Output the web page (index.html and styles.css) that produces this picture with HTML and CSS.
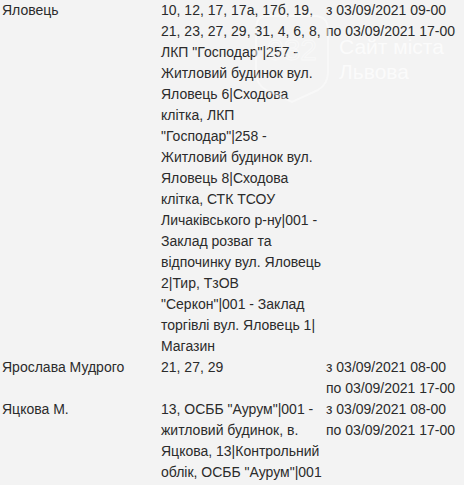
FILE: index.html
```html
<!DOCTYPE html>
<html lang="uk">
<head>
<meta charset="utf-8">
<link rel="stylesheet" href="styles.css">
</head>
<body>
<div class="page">
  <div class="table">
    <div class="row">
      <div class="cell street">Яловець</div>
      <div class="cell houses">10, 12, 17, 17а, 17б, 19, 21, 23, 27, 29, 31, 4, 6, 8, ЛКП "Господар"|257 - Житловий будинок вул. Яловець 6|Сходова клітка, ЛКП "Господар"|258 - Житловий будинок вул. Яловець 8|Сходова клітка, СТК ТСОУ Личаківського р-ну|001 - Заклад розваг та відпочинку вул. Яловець 2|Тир, ТзОВ "Серкон"|001 - Заклад торгівлі вул. Яловець 1|Магазин</div>
      <div class="cell time">з 03/09/2021 09-00<br>по 03/09/2021 17-00</div>
    </div>
    <div class="row">
      <div class="cell street">Ярослава Мудрого</div>
      <div class="cell houses">21, 27, 29</div>
      <div class="cell time">з 03/09/2021 08-00<br>по 03/09/2021 17-00</div>
    </div>
    <div class="row">
      <div class="cell street">Яцкова М.</div>
      <div class="cell houses">13, ОСББ "Аурум"|001 - житловий будинок, в. Яцкова, 13|Контрольний облік, ОСББ "Аурум"|001</div>
      <div class="cell time">з 03/09/2021 08-00<br>по 03/09/2021 17-00</div>
    </div>
  </div>
  <div class="watermark">
    <svg class="logo" width="80" height="90" viewBox="0 0 80 90">
      <path d="M14 2 H62 Q76 2 76 16 V58 Q76 70 66 76 L40 88 L14 76 Q4 70 4 58 V16 Q4 2 14 2 Z" fill="none" stroke="#ffffff" stroke-width="2"/>
      <text x="40" y="46" text-anchor="middle" class="logo-text">032</text>
    </svg>
    <div class="wm-text">Сайт міста<br>Львова</div>
  </div>
</div>
</body>
</html>
```
FILE: styles.css
```css
html, body {
  margin: 0;
  padding: 0;
  background: #f3f3f3;
}
.page {
  position: relative;
  width: 464px;
  height: 485px;
  overflow: hidden;
  font-family: "Liberation Sans", Arial, sans-serif;
  font-size: 14px;
  line-height: 21px;
  color: #2b2b2b;
}
.table {
  padding-left: 2px;
}
.row {
  display: grid;
  grid-template-columns: 159px 165px 1fr;
}
.cell {
  padding: 0;
}
.houses {
  padding-right: 3px;
}
.time {
  white-space: nowrap;
}
.watermark {
  position: absolute;
  left: 252px;
  top: 14px;
  display: flex;
  align-items: flex-start;
  pointer-events: none;
}
.logo {
  opacity: 0.45;
}
.logo-text {
  font-family: "Liberation Sans", Arial, sans-serif;
  font-size: 30px;
  fill: none;
  stroke: #ffffff;
  stroke-width: 1;
}
.wm-text {
  margin-left: 7px;
  margin-top: 20px;
  font-family: "Liberation Sans", Arial, sans-serif;
  font-size: 21px;
  line-height: 25px;
  color: rgba(255, 255, 255, 0.7);
}
```
